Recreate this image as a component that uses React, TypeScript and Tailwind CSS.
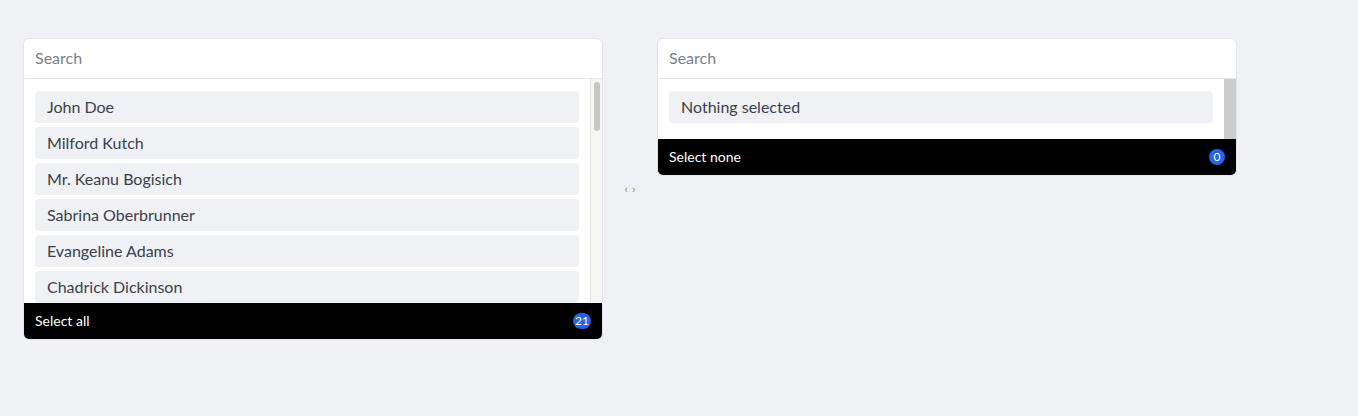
import React from 'react';

const people = [
  'John Doe',
  'Milford Kutch',
  'Mr. Keanu Bogisich',
  'Sabrina Oberbrunner',
  'Evangeline Adams',
  'Chadrick Dickinson',
];

const Badge = ({ count }: { count: number }) => (
  <span className="flex h-4 min-w-4 items-center justify-center rounded-full bg-[#2563eb] px-[2px] text-[12px] leading-none text-white">
    {count}
  </span>
);

const Panel = ({
  items,
  footer,
  count,
  full,
}: {
  items: string[];
  footer: string;
  count: number;
  full?: boolean;
}) => (
  <div className="flex w-[580px] flex-col overflow-hidden rounded-md border border-[#e4e5ea] bg-white">
    <div className="flex h-10 items-center border-b border-[#e4e5ea] pb-[2px] pl-[11px] text-[16px] text-[#7b808c]">
      Search
    </div>
    <div className={full ? 'flex h-[224px]' : 'flex h-[60px]'}>
      <div className="flex min-w-0 flex-1 flex-col gap-1 overflow-hidden px-[11px] py-3">
        {items.map((name) => (
          <div
            key={name}
            className="flex h-8 shrink-0 items-center rounded-[4px] bg-[#f0f1f5] px-3 text-[16px] text-[#3a404c]"
          >
            {name}
          </div>
        ))}
      </div>
      {full ? (
        <div className="flex w-3 shrink-0 justify-center border-l border-[#e8e8e8] bg-[#f6f6f3] pt-[3px]">
          <div className="h-[49px] w-[6px] rounded-full bg-[#c6c6c6]" />
        </div>
      ) : (
        <div className="w-3 shrink-0 bg-[#cdcdcd]" />
      )}
    </div>
    <div className="flex h-9 items-center justify-between bg-black pb-[1px] pl-[11px] pr-[11px] text-[14px] text-white">
      <span>{footer}</span>
      <Badge count={count} />
    </div>
  </div>
);

export default function App() {
  return (
    <div
      className="flex min-h-[416px] items-start bg-[#f0f1f5] pl-[23px] pt-[38px]"
      style={{ fontFamily: 'Lato, "Open Sans", sans-serif' }}
    >
      <Panel items={people} footer="Select all" count={21} full />
      <div className="flex h-[301px] w-[54px] items-center justify-center pl-[4px]">
        <span className="text-[12px] tracking-[4px] text-[#7f8591]">‹›</span>
      </div>
      <Panel items={['Nothing selected']} footer="Select none" count={0} />
    </div>
  );
}
